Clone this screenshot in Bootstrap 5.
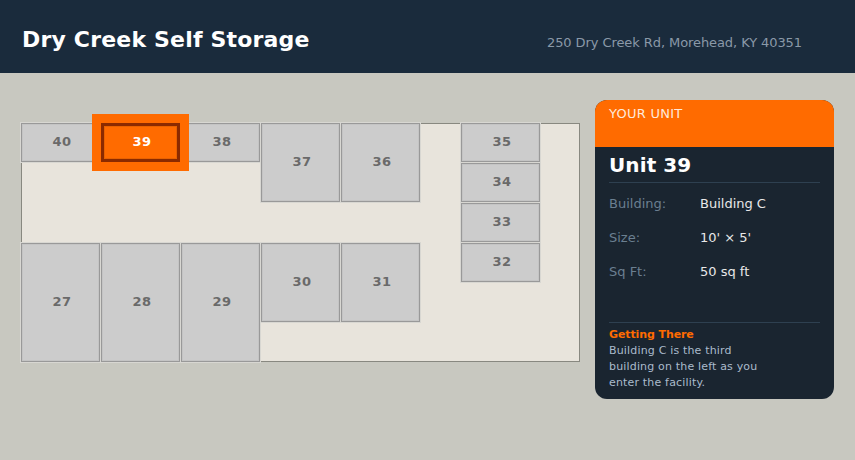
<!DOCTYPE html>
<html lang="en">
<head>
<meta charset="utf-8">
<title>Dry Creek Self Storage</title>
<link href="https://cdn.jsdelivr.net/npm/bootstrap@5.3.0/dist/css/bootstrap.min.css" rel="stylesheet">
<style>
html,body{height:460px;overflow:hidden}
body{background:#c8c8c0;font-family:"DejaVu Sans",sans-serif}
.top-bar{height:73px;background:#1a2b3c;padding:0 53px 0 22px}
.site-title{font-size:22px;font-weight:700;color:#fff;letter-spacing:.18px;margin:7px 0 0;line-height:26px}
.site-addr{font-size:13px;color:#8a99a8;line-height:16px;margin-top:12px;letter-spacing:-.08px}
.stage{padding:27px 21px 0 21px}
.plan{margin-top:23px;width:559px;height:239px;background:#e8e4dc;border:1px solid #888880;position:relative}
.plan-grid{display:grid;grid-template-columns:repeat(14,40px);grid-template-rows:repeat(6,40px);margin:-1px 0 0 -1px;width:560px;height:240px}
.unit{margin:0 1px 1px 0;background:#ccc;border:1px solid #999;box-shadow:0 0 0 1px #d8d7d2,inset 0 0 0 1px #c4c4c4;color:#6a6a6a;font-size:13px;font-weight:700;letter-spacing:.5px;padding:0 0 2px 3px;display:flex;align-items:center;justify-content:center;line-height:1}
.unit-on{background:#ff6b00;border:3px solid #8b2a00;color:#fff;box-shadow:0 0 0 9px #ff6b00,inset 0 0 0 1px #e86200;position:relative;z-index:2}
.u-w2{grid-column:span 2}
.u-h2{grid-row:span 2}
.info{width:239px;height:299px;margin-left:15px;background:#1a2530;border-radius:12px;overflow:hidden}
.info-head{height:47px;background:#ff6b00;color:#ffe9da;font-size:13px;line-height:16px;padding:6px 14px 0;letter-spacing:.25px}
.info-body{padding:0 14px 8px;height:252px}
.info-name{font-size:20px;font-weight:700;color:#fff;letter-spacing:.1px;line-height:24px;margin:6px 0 0;padding-bottom:5px;border-bottom:1px solid #2e4050}
.info-row{font-size:13px;line-height:16px;margin-bottom:18px}
.info-row:first-of-type{margin-top:13px}
.info-key{width:91px;color:#6b7f90}
.info-val{color:#e8e8e8}
.info-foot{margin-top:auto;border-top:1px solid #2e4050;padding-top:4px;font-size:11px;line-height:16px;letter-spacing:.17px;color:#aabbcc}
.info-foot strong{display:block;color:#ff6b00;font-weight:700;letter-spacing:-.1px}
</style>
</head>
<body>
<header class="top-bar d-flex align-items-center justify-content-between">
  <h1 class="site-title">Dry Creek Self Storage</h1>
  <div class="site-addr">250 Dry Creek Rd, Morehead, KY 40351</div>
</header>
<main class="stage d-flex align-items-start">
  <div class="plan flex-shrink-0">
    <div class="plan-grid">
      <div class="unit u-w2">40</div>
      <div class="unit u-w2 unit-on">39</div>
      <div class="unit u-w2">38</div>
      <div class="unit u-w2 u-h2">37</div>
      <div class="unit u-w2 u-h2">36</div>
      <div class="unit u-w2" style="grid-column:12 / span 2;grid-row:1">35</div>
      <div class="unit u-w2" style="grid-column:12 / span 2;grid-row:2">34</div>
      <div class="unit u-w2" style="grid-column:12 / span 2;grid-row:3">33</div>
      <div class="unit u-w2" style="grid-column:12 / span 2;grid-row:4">32</div>
      <div class="unit u-w2" style="grid-column:1 / span 2;grid-row:4 / span 3">27</div>
      <div class="unit u-w2" style="grid-column:3 / span 2;grid-row:4 / span 3">28</div>
      <div class="unit u-w2" style="grid-column:5 / span 2;grid-row:4 / span 3">29</div>
      <div class="unit u-w2" style="grid-column:7 / span 2;grid-row:4 / span 2">30</div>
      <div class="unit u-w2" style="grid-column:9 / span 2;grid-row:4 / span 2">31</div>
    </div>
  </div>
  <aside class="info flex-shrink-0">
    <div class="info-head">YOUR UNIT</div>
    <div class="info-body d-flex flex-column">
      <h2 class="info-name">Unit 39</h2>
      <div class="info-row d-flex"><span class="info-key">Building:</span><span class="info-val">Building C</span></div>
      <div class="info-row d-flex"><span class="info-key">Size:</span><span class="info-val">10' × 5'</span></div>
      <div class="info-row d-flex"><span class="info-key">Sq Ft:</span><span class="info-val">50 sq ft</span></div>
      <div class="info-foot"><strong>Getting There</strong>Building C is the third<br>building on the left as you<br>enter the facility.</div>
    </div>
  </aside>
</main>
<script src="https://cdn.jsdelivr.net/npm/bootstrap@5.3.0/dist/js/bootstrap.bundle.min.js"></script>
</body>
</html>
